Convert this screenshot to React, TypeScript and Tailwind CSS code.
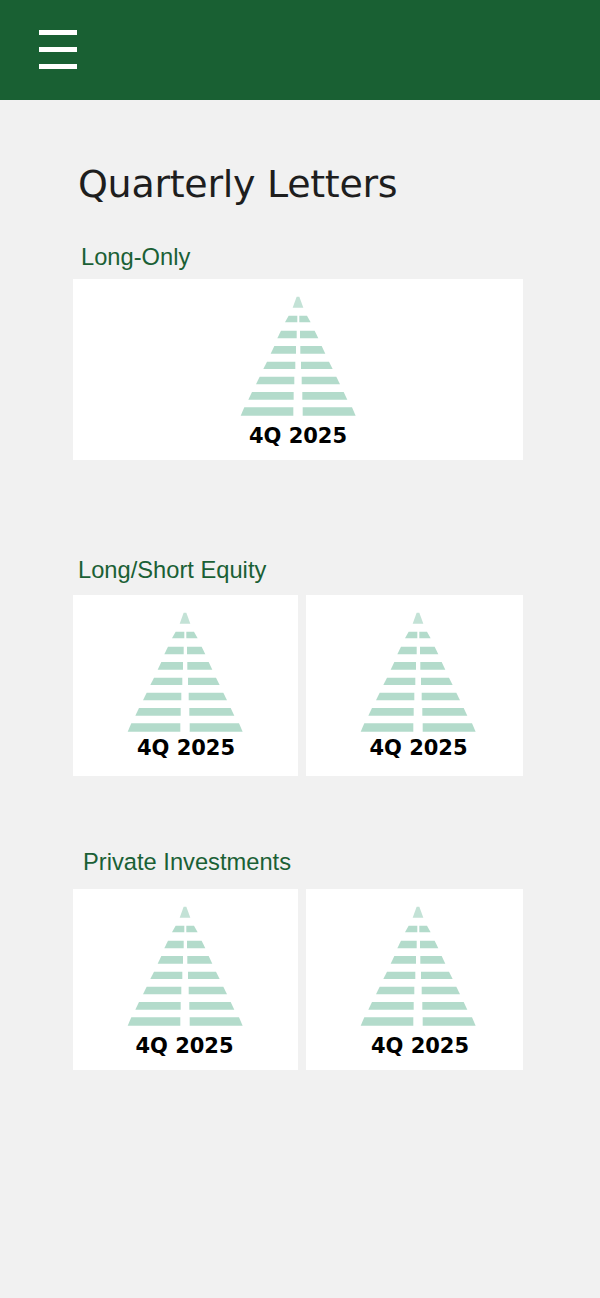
import React from 'react'

/* rows of the tree logo, in reference zoom coordinates: [top, bottom, left, right, innerLeft, innerRight] */
const ROWS = [
  [92, 112, 195, 272, 232, 238],
  [137, 160, 172, 295, 230, 240],
  [183, 206, 152, 316, 228, 241],
  [230, 252, 130, 338, 226, 243],
  [275, 298, 108, 360, 223, 245],
  [321, 344, 85, 382, 221, 247],
  [367, 392, 62, 407, 220, 248],
]

function TreeLogo() {
  return (
    <svg viewBox="60 33 350 360" className="block h-[120px] w-[116.67px]" aria-hidden="true">
      <polygon points="230,35 238,35 250,68 218,68" fill="#c3e2d6" />
      {ROWS.map(([top, bottom, left, right, innerLeft, innerRight]) => (
        <g key={top} fill="#b3dbcb">
          <polygon points={`${left + 11},${top} ${innerLeft},${top} ${innerLeft},${bottom} ${left},${bottom}`} />
          <polygon points={`${innerRight},${top} ${right - 11},${top} ${right},${bottom} ${innerRight},${bottom}`} />
        </g>
      ))}
    </svg>
  )
}

function LetterCard({ className = '', labelClass = '' }: { className?: string; labelClass?: string }) {
  return (
    <div className={`flex h-[181px] flex-col items-center bg-white pt-[17px] ${className}`}>
      <TreeLogo />
      <span className={`text-[21px] font-bold leading-[28px] text-black [font-family:'DejaVu_Sans',sans-serif] ${labelClass}`}>
        4Q 2025
      </span>
    </div>
  )
}

function SectionLabel({ children, className = '' }: { children: React.ReactNode; className?: string }) {
  return (
    <h2 className={`text-[23.7px] leading-[30px] text-[#1a6035] [font-family:'Liberation_Sans',sans-serif] ${className}`}>
      {children}
    </h2>
  )
}

export default function App() {
  return (
    <div className="min-h-[1298px] bg-[#f1f1f1]">
      <header className="flex h-[100px] flex-col justify-center gap-[12px] bg-[#196033] pb-[1px] pl-[38.5px]">
        <div className="h-[5px] w-[38px] bg-white" />
        <div className="h-[5px] w-[38px] bg-white" />
        <div className="h-[5px] w-[38px] bg-white" />
      </header>

      <main className="w-[523px] pl-[73px]">
        <h1 className="ml-[5px] mt-[58px] text-[38px] leading-[52px] tracking-[-0.3px] text-[#1e1e1e] [font-family:'DejaVu_Sans',sans-serif]">
          Quarterly Letters
        </h1>

        <SectionLabel className="ml-[8px] mt-[32px]">Long-Only</SectionLabel>
        <LetterCard className="mt-[7px]" labelClass="mt-[6px]" />

        <SectionLabel className="ml-[5px] mt-[95px]">Long/Short Equity</SectionLabel>
        <div className="mt-[10px] grid grid-cols-[225px_217px] gap-x-[8px]">
          <LetterCard labelClass="mt-[2px] translate-x-[0.5px]" />
          <LetterCard className="pl-[8px]" labelClass="mt-[2px]" />
        </div>

        <SectionLabel className="ml-[10px] mt-[71px]">Private Investments</SectionLabel>
        <div className="mt-[12px] grid grid-cols-[225px_217px] gap-x-[8px]">
          <LetterCard labelClass="mt-[6px] -translate-x-[1px]" />
          <LetterCard className="pl-[8px]" labelClass="mt-[6px] translate-x-[1.5px]" />
        </div>
      </main>
    </div>
  )
}
